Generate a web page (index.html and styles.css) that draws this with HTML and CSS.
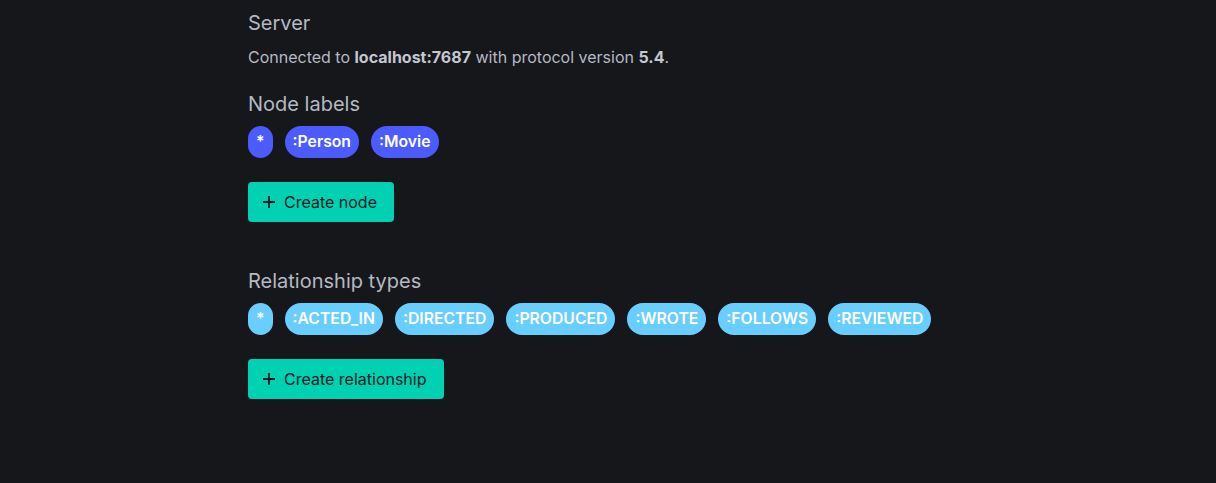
FILE: index.html
```html
<!DOCTYPE html>
<html>
<head>
<meta charset="utf-8">
<link rel="stylesheet" href="styles.css">
</head>
<body>
<main class="panel">
  <section class="section">
    <h2 class="title">Server</h2>
    <p class="text">Connected to <b>localhost:7687</b> with protocol version <b>5.4</b>.</p>
  </section>
  <section class="section">
    <h2 class="title">Node labels</h2>
    <div class="pills">
      <span class="pill pill-node">*</span>
      <span class="pill pill-node">:Person</span>
      <span class="pill pill-node">:Movie</span>
    </div>
    <button class="btn"><svg class="plus" width="14" height="14" viewBox="0 0 14 14"><path d="M7 1v12M1 7h12" stroke="currentColor" stroke-width="1.8" fill="none"/></svg>Create node</button>
  </section>
  <section class="section rel">
    <h2 class="title">Relationship types</h2>
    <div class="pills">
      <span class="pill pill-rel">*</span>
      <span class="pill pill-rel">:ACTED_IN</span>
      <span class="pill pill-rel">:DIRECTED</span>
      <span class="pill pill-rel">:PRODUCED</span>
      <span class="pill pill-rel">:WROTE</span>
      <span class="pill pill-rel">:FOLLOWS</span>
      <span class="pill pill-rel">:REVIEWED</span>
    </div>
    <button class="btn"><svg class="plus" width="14" height="14" viewBox="0 0 14 14"><path d="M7 1v12M1 7h12" stroke="currentColor" stroke-width="1.8" fill="none"/></svg>Create relationship</button>
  </section>
</main>
</body>
</html>
```
FILE: styles.css
```css
html, body {
  margin: 0;
  padding: 0;
  background: #16171b;
  height: 100%;
}
body {
  font-family: Inter, "Noto Sans", sans-serif;
  color: #b5b9c2;
}
.panel {
  padding: 11px 0 0 248px;
}
.title {
  margin: 0;
  font-size: 20px;
  font-weight: 400;
  line-height: 24px;
  color: #b5b9c2;
}
.text {
  margin: 10px 0 0;
  font-size: 16px;
  line-height: 24px;
}
.text b {
  font-weight: 700;
  color: #c3c7cf;
}
.section + .section {
  margin-top: 23px;
}
.section.rel {
  margin-top: 47px;
}
.pills {
  display: flex;
  gap: 12px;
  margin-top: 10px;
}
.pill {
  height: 32px;
  line-height: 32px;
  padding: 0 8px;
  border-radius: 16px;
  font-size: 15.75px;
  font-weight: 600;
  color: #ffffff;
  box-sizing: border-box;
}
.pill-node { background: #4b5bfd; }
.pill-rel { background: #68cdff; }
.btn {
  margin-top: 24px;
  display: flex;
  align-items: center;
  gap: 8px;
  height: 40px;
  padding: 0 17px 0 14px;
  border: none;
  border-radius: 4px;
  background: #00d1b3;
  color: #0c1a1e;
  font-family: Inter, "Noto Sans", sans-serif;
  font-size: 16px;
  font-weight: 400;
}
.plus { display: block; }
```
